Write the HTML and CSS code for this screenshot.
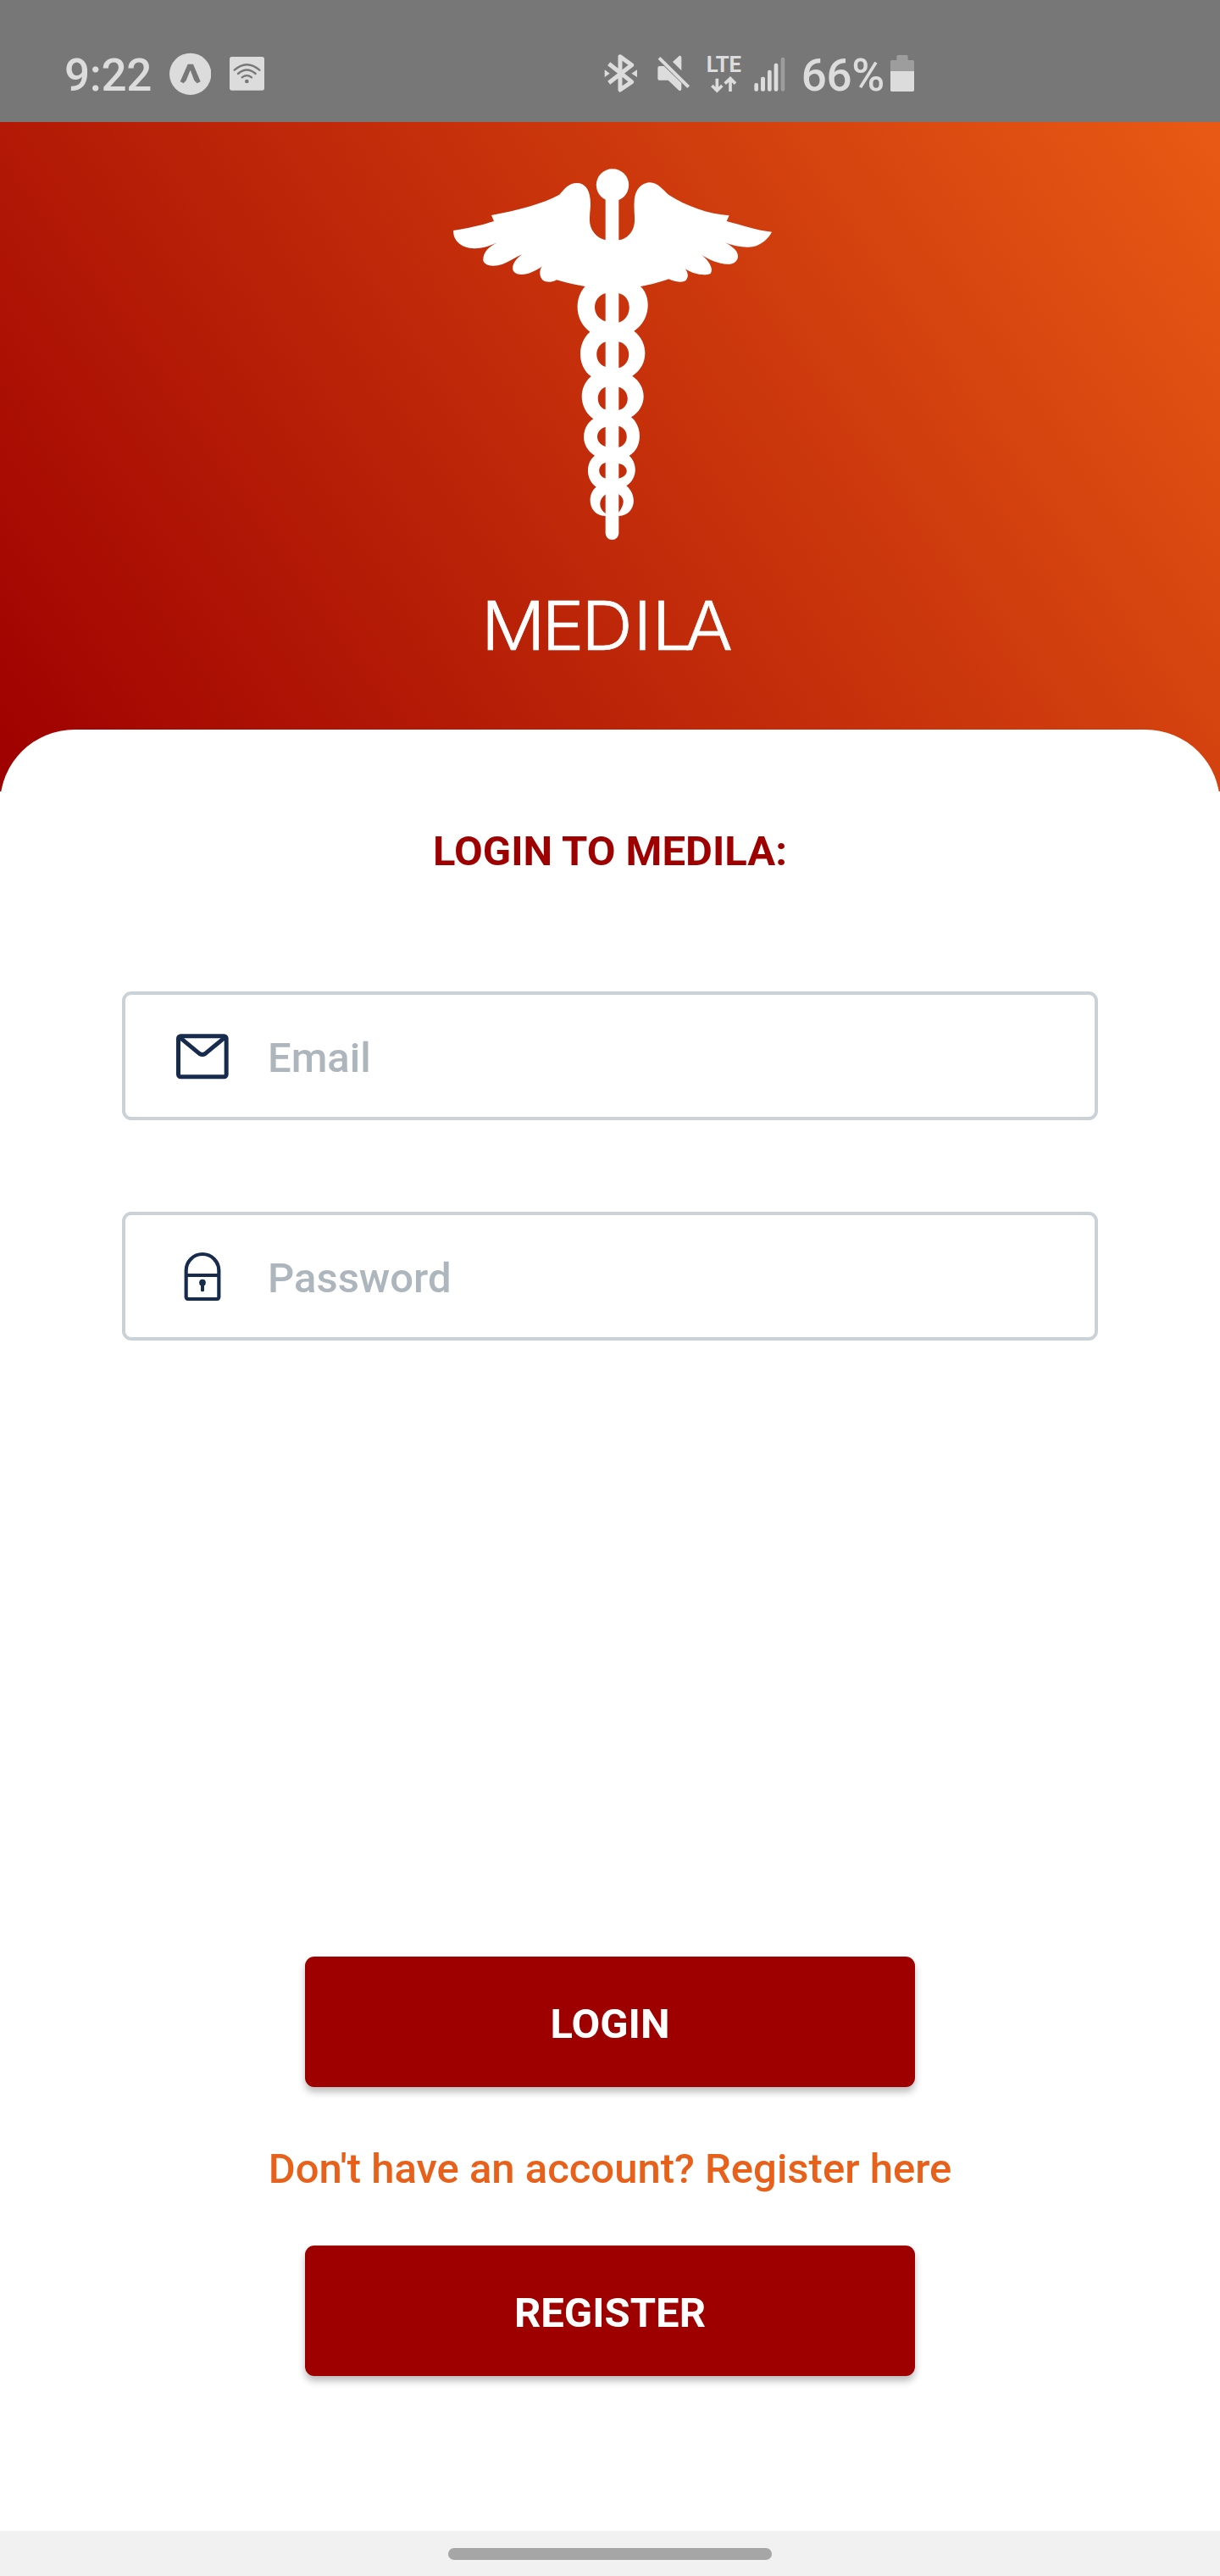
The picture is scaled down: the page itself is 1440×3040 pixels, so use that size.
FILE: index.html
```html
<!DOCTYPE html>
<html lang="en">
<head>
<meta charset="utf-8">
<title>Medila</title>
<link rel="stylesheet" href="styles.css">
</head>
<body>
<div class="screen">
  <div class="status">
    <div class="status-left">
      <span class="status-text time">9:22</span>
      <svg class="icon" style="width:49.33px" viewBox="480 60 148 160">
        <circle cx="554" cy="142" r="74"/>
        <path class="cut" d="M545 107h19l26 62-12 6-10-10-14-37-15 37-9 10-12-6z"/>
      </svg>
      <svg class="icon wifi" style="width:41px" viewBox="693 60 123 160">
        <rect x="693" y="81" width="123" height="119" rx="8"/>
        <g class="cut-line"><path d="M710 128q44-39 89 0M723 141q31-27 62 0M737 154q17-13 34 0"/></g>
        <circle class="cut" cx="754" cy="168" r="7"/>
      </svg>
    </div>
    <div class="status-right">
      <svg class="icon" style="width:40px" viewBox="98 60 120 160">
        <path class="line bt" d="M115 106L196 170L155 198V80L196 110L115 173"/>
        <path d="M100 127l18 13-18 13zM215 127l-20 13 20 13z"/>
      </svg>
      <svg class="icon mute" style="width:40.67px" viewBox="284 60 122 160">
        <path d="M341 99L364 78Q372 76 372 84V130zM288 121Q288 114 295 114H310L372 174V195Q371 203 363 200L325 164H294Q288 164 288 158z"/>
        <path class="line" d="M293 85L397 188"/>
      </svg>
      <svg class="icon lte" style="width:43.33px" viewBox="460 60 130 160">
        <text x="462" y="135" textLength="124" lengthAdjust="spacingAndGlyphs">LTE</text>
        <path class="line arrows" d="M500 158V200M482 183L500 201L518 183M547 204V160M528 176L547 158L565 176"/>
      </svg>
      <svg class="icon signal" style="width:38.67px" viewBox="626 60 116 160">
        <rect x="630" y="174" width="14" height="29" rx="6"/>
        <rect x="653" y="152" width="15" height="51" rx="6"/>
        <rect x="677" y="128" width="14" height="75" rx="6"/>
        <rect x="700" y="104" width="14" height="99" rx="6"/>
        <rect class="dim" x="724" y="83" width="14" height="120" rx="6"/>
      </svg>
      <span class="status-text percent">66%</span>
      <svg class="icon" style="width:30px" viewBox="1110 60 90 160">
        <path class="dim" d="M1113 132V98Q1113 93 1118 93H1135V80Q1135 75 1140 75H1170Q1175 75 1175 80V93H1192Q1197 93 1197 98V132z"/>
        <path d="M1113 132H1197V199Q1197 204 1192 204H1118Q1113 204 1113 199z"/>
      </svg>
    </div>
  </div>

  <header class="hero">
    <svg class="caduceus" viewBox="30 45 1170 1335">
      <circle cx="609" cy="115" r="57.500"/>
      <rect x="584" y="130" width="47" height="1241" rx="23"/>
      <path d="M584 310C550 302 526 270 528 235C528 205 533 195 530 165C527 130 510 108 483 108C455 108 440 127 421 149C360 182 270 205 180 222L189 243C150 256 100 268 45 276C45 315 75 338 120 340C152 340 182 328 214 313C170 332 150 352 151 382C155 402 188 406 220 395C245 385 265 372 288 361C265 380 253 395 256 415C262 435 290 435 315 427C335 420 350 410 360 403C350 413 348 437 361 451C375 462 398 460 411 451Q465 467 512 474H708Q765 464 808 448C825 457 855 463 869 452C880 437 875 425 867 412C890 428 930 439 956 429C969 408 945 378 922 361C950 380 990 398 1025 395C1060 389 1061 355 1035 337C1025 328 1015 323 1006 319C1040 331 1075 338 1105 334C1140 325 1160 305 1173 281C1120 276 1070 258 1013 243L1022 223C950 218 870 190 808 150C785 130 770 107 741 106C706 107 686 138 686 175C684 200 688 220 687 245C685 280 660 307 630 310Z"/>
      <path fill-rule="evenodd" d="M512 474C476 512 470 590 529 635C483 675 483 755 533 793C488 830 488 905 541 943C495 975 495 1042 546 1073C513 1098 513 1158 551 1184C515 1212 524 1285 584 1287H630C690 1285 700 1215 658 1180C698 1155 698 1100 668 1073C716 1046 716 970 675 937C733 902 733 828 679 791C738 755 738 672 685 632C746 592 746 508 708 474Z
        M585 498V598C533 583 533 512 585 498ZM630 498V602C681 588 681 508 630 498Z
        M585 670V759C542 746 542 683 585 670ZM630 670V763C679 751 679 679 630 670Z
        M585 830V910C548 900 548 841 585 830ZM630 830V912C673 903 673 840 630 830Z
        M585 971V1041C545 1031 545 981 585 971ZM630 968V1044C669 1036 669 976 630 968Z
        M585 1097V1154C554 1145 554 1106 585 1097ZM630 1101V1154C669 1147 669 1108 630 1101Z
        M585 1210V1279C558 1261 558 1228 585 1210ZM630 1209V1276C653 1243 653 1225 630 1209Z"/>
    </svg>
    <svg class="wordmark" viewBox="0 0 300 80">
      <text transform="scale(1.05 1)" x="-5.700 62.400 107 165 186.200 223" y="67">MEDILA</text>
    </svg>
  </header>

  <main class="card">
    <h1 class="title">LOGIN TO MEDILA:</h1>
    <label class="field">
      <svg class="field-icon" viewBox="228 195 198 198">
        <g class="mail"><rect x="241.500" y="218" width="170" height="144" rx="8"/>
        <path d="M247 223L316 280Q327 287 337 280L406 223"/></g>
      </svg>
      <input class="input" type="email" placeholder="Email">
    </label>
    <label class="field">
      <svg class="field-icon" viewBox="228 195 198 198">
        <g class="lock"><path d="M269 285V268a58 58 0 0 1 116 0V285M269 285H385V361Q385 369 378 369H276Q269 369 269 361z"/></g>
        <circle class="key" cx="327" cy="311" r="11.500"/><rect class="key" x="321" y="311" width="12" height="32" rx="5"/>
      </svg>
      <input class="input" type="password" placeholder="Password">
    </label>
    <div class="actions">
      <button class="button">LOGIN</button>
      <a class="hint">Don't have an account? Register here</a>
      <button class="button">REGISTER</button>
    </div>
  </main>

  <div class="navbar"><div class="handle"></div></div>
</div>
</body>
</html>
```
FILE: styles.css
```css
* { box-sizing: border-box; }

body {
  margin: 0;
  background: #fff;
  font-family: Roboto, "Liberation Sans", sans-serif;
}

.screen {
  display: flex;
  flex-direction: column;
  width: 1440px;
  height: 3040px;
}

.status {
  display: flex;
  flex: none;
  height: 144px;
  padding-top: 60px;
  background: #777;
  color: #dcdcdc;
}

.status-left {
  display: flex;
  width: 712.67px;
  padding-left: 76px;
}

.status-right { display: flex; }

.status-text {
  flex: none;
  height: 57px;
  font-size: 53px;
  font-weight: 500;
  line-height: 58px;
  white-space: nowrap;
}

.time {
  width: 124px;
  letter-spacing: -0.3px;
}

.percent {
  width: 104.33px;
  margin-left: 18.33px;
  letter-spacing: -0.3px;
}

.icon {
  flex: none;
  height: 53.33px;
  fill: #dcdcdc;
}

.icon .cut { fill: #777; }

.icon .cut-line {
  fill: none;
  stroke: #777;
  stroke-width: 7;
  stroke-linecap: round;
}

.icon .line {
  fill: none;
  stroke: #dcdcdc;
  stroke-width: 12;
}

.icon .bt {
  stroke-width: 15;
  stroke-linejoin: round;
}

.icon .arrows { stroke-width: 11; }
.icon .dim { fill: #9d9d9d; }
.wifi { margin-left: 21.67px; }
.mute { margin-left: 22px; }
.lte { margin-left: 18px; }
.signal { margin-left: 12px; }

.lte text {
  font-size: 76px;
  font-weight: 700;
}

.hero {
  display: flex;
  flex: none;
  flex-direction: column;
  height: 790px;
  padding-top: 51px;
  background: linear-gradient(55deg, #9e0000, #e85a14);
}

.caduceus {
  width: 390px;
  height: 445px;
  margin-left: 530px;
  fill: #fff;
}

.wordmark {
  width: 300px;
  height: 80px;
  margin: 60px 0 0 574px;
  overflow: visible;
}

.wordmark text {
  fill: #fff;
  stroke: #fff;
  stroke-width: 0.7px;
  font-family: Inter, sans-serif;
  font-size: 80px;
  font-weight: 300;
}

.card {
  display: flex;
  position: relative;
  flex: 1;
  flex-direction: column;
  margin-top: -73px;
  padding: 114px 144px 0;
  border-radius: 88px 88px 0 0;
  background: #fff;
}

.title {
  height: 60px;
  margin: 0 0 135px;
  color: #9e0000;
  font-size: 49px;
  font-weight: 700;
  line-height: 60px;
  text-align: center;
}

.field {
  display: flex;
  flex: none;
  align-items: center;
  height: 152px;
  margin-bottom: 108px;
  padding-left: 58px;
  border: 4px solid #cbd2d7;
  border-radius: 11px;
}

.field-icon {
  flex: none;
  width: 66px;
  height: 66px;
  margin-top: 4px;
}

.mail,
.lock {
  fill: none;
  stroke: #172b4d;
  stroke-width: 15;
  stroke-linejoin: round;
}

.lock { stroke-width: 12.5; }
.key { fill: #172b4d; }

.input {
  flex: 1;
  height: 140px;
  margin-left: 44px;
  padding: 4px 0 0;
  border: 0;
  outline: 0;
  background: none;
  font: 500 49px Roboto, "Liberation Sans", sans-serif;
}

.input::placeholder {
  color: #adb5bd;
  opacity: 1;
}

.actions {
  display: flex;
  flex-direction: column;
  align-items: center;
  margin-top: 619px;
}

.button {
  width: 720px;
  height: 154px;
  padding: 4px 0 0;
  border: 0;
  border-radius: 11px;
  background: #9e0000;
  box-shadow: 0 6px 9px rgba(0, 0, 0, 0.26);
  color: #fff;
  font: 700 49px Roboto, "Liberation Sans", sans-serif;
}

.hint {
  height: 187px;
  color: #e8611a;
  font-size: 49px;
  font-weight: 500;
  line-height: 193px;
}

.navbar {
  display: flex;
  flex: none;
  align-items: center;
  justify-content: center;
  height: 53px;
  background: #f1f1f1;
}

.handle {
  width: 382px;
  height: 14px;
  border-radius: 7px;
  background: #a6a6a6;
}
```
